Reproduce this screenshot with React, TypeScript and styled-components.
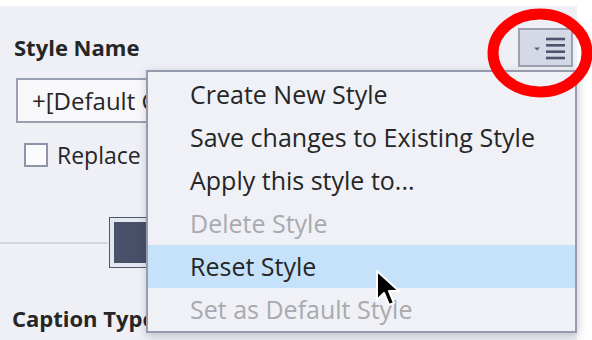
import React from "react";
import styled, { createGlobalStyle } from "styled-components";

const GlobalStyle = createGlobalStyle`
  html, body {
    margin: 0;
    padding: 0;
    background: #ffffff;
    font-family: "Open Sans", "Liberation Sans", sans-serif;
  }
`;

const Page = styled.div`
  width: 592px;
  height: 340px;
  padding-top: 6px;
  box-sizing: border-box;
  overflow: hidden;
  background: #ffffff;
`;

const Panel = styled.div`
  position: relative;
  width: 577px;
  height: 334px;
  background: #eff0f6;
  color: #262626;
`;

const Header = styled.div`
  display: flex;
  align-items: flex-start;
  justify-content: space-between;
  height: 66px;
  padding: 22px 4px 0 14px;
  box-sizing: border-box;
`;

const Label = styled.div`
  font-size: 22px;
  font-weight: 700;
  line-height: 26px;
  margin-top: 6px;
`;

const MenuButton = styled.button`
  width: 55px;
  height: 39px;
  box-sizing: border-box;
  border: 2px solid #9ba1b3;
  background: #d5d9e6;
  padding: 0;
  display: flex;
  align-items: center;
  justify-content: center;
`;

const Field = styled.div`
  margin: 6px 0 0 16px;
  width: 200px;
  height: 45px;
  box-sizing: border-box;
  border: 2px solid #9aa0b2;
  background: #f8f8fb;
  font-size: 24px;
  line-height: 41px;
  padding-left: 14px;
  white-space: nowrap;
  overflow: hidden;
`;

const CheckRow = styled.label`
  display: flex;
  align-items: center;
  gap: 9px;
  margin: 20px 0 0 24px;
  font-size: 23px;
  line-height: 24px;
`;

const CheckBox = styled.span`
  width: 24px;
  height: 24px;
  box-sizing: border-box;
  border: 2px solid #8f95a8;
  background: #fbfbfd;
`;

const ColorRow = styled.div`
  display: flex;
  align-items: center;
  margin-top: 50px;
`;

const Rule = styled.div`
  width: 108px;
  height: 2px;
  background: #d6d7dd;
`;

const Swatch = styled.div`
  margin-left: 1px;
  width: 60px;
  height: 51px;
  box-sizing: border-box;
  border: 1px solid #50566c;
  padding: 4px;
  background: #e4e6f0;
`;

const SwatchFill = styled.div`
  width: 100%;
  height: 100%;
  background: linear-gradient(90deg, #4b526c, #444a62);
`;

const SectionLabel = styled(Label)`
  margin: 37px 0 0 12px;
`;

const Menu = styled.ul`
  position: absolute;
  left: 146px;
  top: 64px;
  width: 431px;
  height: 263px;
  box-sizing: border-box;
  margin: 0;
  padding: 1px 0 0;
  list-style: none;
  background: #eff1f7;
  border: 2px solid #959aad;
  box-shadow: 1px 3px 9px rgba(60, 64, 80, 0.28);
`;

const MenuItem = styled.li<{ $disabled?: boolean; $active?: boolean }>`
  height: 43px;
  line-height: 43px;
  padding-left: 42px;
  font-size: 25px;
  color: ${(p) => (p.$disabled ? "#a9aaae" : "#262626")};
  background: ${(p) => (p.$active ? "#c5e2fa" : "transparent")};
  white-space: nowrap;
`;

const Highlight = styled.svg`
  position: absolute;
  left: 485px;
  top: -5px;
  pointer-events: none;
`;

const Cursor = styled.svg`
  position: absolute;
  left: 373px;
  top: 262px;
  pointer-events: none;
`;

const items = [
  { label: "Create New Style" },
  { label: "Save changes to Existing Style" },
  { label: "Apply this style to..." },
  { label: "Delete Style", disabled: true },
  { label: "Reset Style", active: true },
  { label: "Set as Default Style", disabled: true },
];

export default function App() {
  return (
    <Page>
      <GlobalStyle />
      <Panel>
        <Header>
          <Label>Style Name</Label>
          <MenuButton aria-label="Style menu">
            <svg width="40" height="30" viewBox="0 0 40 30">
              <path d="M8 14.5h6l-3 3z" fill="#5a6078" />
              <g stroke="#4d5470" strokeWidth="2.6">
                <line x1="20" y1="6" x2="39" y2="6" />
                <line x1="20" y1="12.3" x2="39" y2="12.3" />
                <line x1="20" y1="18.7" x2="39" y2="18.7" />
                <line x1="20" y1="25" x2="39" y2="25" />
              </g>
            </svg>
          </MenuButton>
        </Header>
        <Field>+[Default Caption Style]</Field>
        <CheckRow>
          <CheckBox />
          Replace existing
        </CheckRow>
        <ColorRow>
          <Rule />
          <Swatch>
            <SwatchFill />
          </Swatch>
        </ColorRow>
        <SectionLabel>Caption Type</SectionLabel>

        <Menu>
          {items.map((it) => (
            <MenuItem key={it.label} $disabled={it.disabled} $active={it.active}>
              {it.label}
            </MenuItem>
          ))}
        </Menu>

        <Highlight width="110" height="100" viewBox="0 0 110 100">
          <ellipse cx="55" cy="52" rx="47" ry="39" fill="none" stroke="#ff0000" strokeWidth="11" />
        </Highlight>

        <Cursor width="30" height="46" viewBox="0 0 30 46">
          <path
            d="M4 3 L4 32 L11 25 L16 37 L21 35 L16 23 L26 23 Z"
            fill="#000"
            stroke="#fff"
            strokeWidth="2"
            strokeLinejoin="round"
          />
        </Cursor>
      </Panel>
    </Page>
  );
}
